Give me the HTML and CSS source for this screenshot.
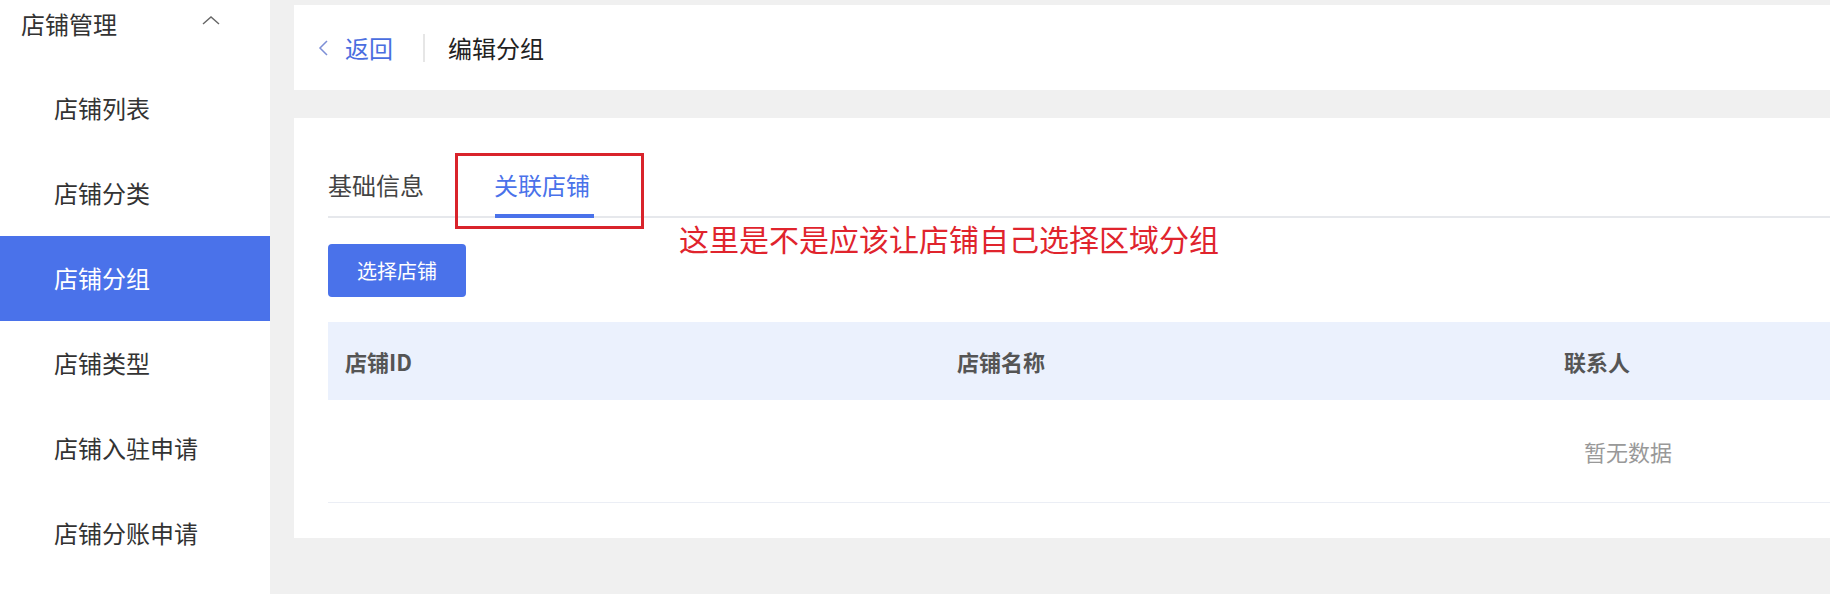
FILE: index.html
```html
<!DOCTYPE html>
<html lang="zh-CN">
<head>
    <meta charset="UTF-8">
    <meta name="viewport" content="width=device-width, initial-scale=1.0">
    <title>编辑分组</title>
    <link rel="stylesheet" href="styles.css">
</head>
<body>
    <div class="app">
        <aside class="sidebar">
            <div class="menu">
                <div class="menu-title">
                    <span>店铺管理</span>
                    <svg class="arrow-up" width="18" height="9" viewBox="0 0 18 9">
                        <polyline points="1,8 9,1 17,8" fill="none" stroke="#666" stroke-width="1.4"/>
                    </svg>
                </div>
                <div class="menu-item">店铺列表</div>
                <div class="menu-item">店铺分类</div>
                <div class="menu-item active">店铺分组</div>
                <div class="menu-item">店铺类型</div>
                <div class="menu-item">店铺入驻申请</div>
                <div class="menu-item">店铺分账申请</div>
            </div>
        </aside>

        <main class="main">
            <div class="page-header">
                <a class="back">
                    <svg width="10" height="16" viewBox="0 0 10 16">
                        <polyline points="9,1 2,8 9,15" fill="none" stroke="#7d8fd6" stroke-width="1.5"/>
                    </svg>
                    <span>返回</span>
                </a>
                <span class="divider"></span>
                <span class="page-title">编辑分组</span>
            </div>

            <div class="panel">
                <div class="tabs">
                    <div class="tab">基础信息</div>
                    <div class="tab active">关联店铺</div>
                </div>

                <!-- 批注 -->
                <div class="note-box"></div>
                <div class="note-text">这里是不是应该让店铺自己选择区域分组</div>

                <button class="btn-primary">选择店铺</button>

                <table class="table">
                    <colgroup>
                        <col style="width: 612px">
                        <col style="width: 607px">
                        <col style="width: 607px">
                        <col>
                    </colgroup>
                    <thead>
                        <tr>
                            <th>店铺ID</th>
                            <th>店铺名称</th>
                            <th>联系人</th>
                            <th></th>
                        </tr>
                    </thead>
                    <tbody>
                        <tr>
                            <td class="empty" colspan="4">暂无数据</td>
                        </tr>
                    </tbody>
                </table>
            </div>
        </main>
    </div>
</body>
</html>
```

FILE: styles.css
```css
* {
    box-sizing: border-box;
    margin: 0;
    padding: 0;
}

body {
    font-family: "Noto Sans CJK SC", "Noto Sans", sans-serif;
    background-color: #f0f0f0;
    color: #333;
    overflow: hidden;
}

.app {
    display: flex;
    height: 594px;
}

/* 侧边栏 */
.sidebar {
    width: 270px;
    flex-shrink: 0;
    background-color: #fff;
    overflow: hidden;
}

.menu {
    margin-top: -19px;
}

.menu-title {
    height: 85px;
    display: flex;
    align-items: center;
    justify-content: space-between;
    padding: 0 50px 0 21px;
    font-size: 24px;
    color: #333;
}

.arrow-up {
    margin-top: -6px;
}

.menu-item {
    height: 85px;
    line-height: 83px;
    padding-left: 54px;
    font-size: 24px;
    color: #333;
}

.menu-item.active {
    background-color: #4a72ea;
    color: #fff;
}

/* 主体 */
.main {
    flex: 1;
    min-width: 0;
    overflow: hidden;
    padding: 5px 0 0 24px;
}

.page-header {
    width: 2660px;
    height: 85px;
    background-color: #fff;
    display: flex;
    align-items: center;
    padding-left: 24px;
}

.back {
    display: flex;
    align-items: center;
    gap: 17px;
    color: #4a6ee0;
    font-size: 24px;
}

.divider {
    width: 2px;
    height: 28px;
    background-color: #e6e6e6;
    margin: 0 23px 0 30px;
}

.page-title {
    font-size: 24px;
    color: #222;
}

.panel {
    position: relative;
    width: 2660px;
    margin-top: 28px;
    background-color: #fff;
    padding: 40px 0 35px 34px;
}

.tabs {
    display: flex;
    gap: 70px;
    border-bottom: 2px solid #e6e8ec;
}

.tab {
    position: relative;
    height: 58px;
    line-height: 54px;
    font-size: 24px;
    color: #444;
}

.tab.active {
    color: #4a72ea;
}

.tab.active::after {
    content: "";
    position: absolute;
    left: 1px;
    right: -4px;
    bottom: -2px;
    height: 4px;
    background-color: #4a72ea;
}

.note-box {
    position: absolute;
    left: 161px;
    top: 35px;
    width: 189px;
    height: 76px;
    border: 3px solid #d9232b;
}

.note-text {
    position: absolute;
    left: 385px;
    top: 102px;
    font-size: 30px;
    line-height: 36px;
    color: #e0242d;
}

.btn-primary {
    display: block;
    width: 138px;
    height: 53px;
    margin-top: 26px;
    border: none;
    border-radius: 4px;
    background-color: #4a72ea;
    color: #fff;
    font-family: inherit;
    font-size: 20px;
}

.table {
    width: 2600px;
    margin-top: 25px;
    border-collapse: collapse;
    table-layout: fixed;
}

.table th {
    height: 78px;
    background-color: #ebf1fd;
    text-align: left;
    padding-left: 17px;
    font-size: 22px;
    font-weight: 700;
    color: #555;
}

.table td.empty {
    height: 102px;
    text-align: center;
    font-size: 22px;
    color: #999;
    border-bottom: 1px solid #ebeef5;
}
```
